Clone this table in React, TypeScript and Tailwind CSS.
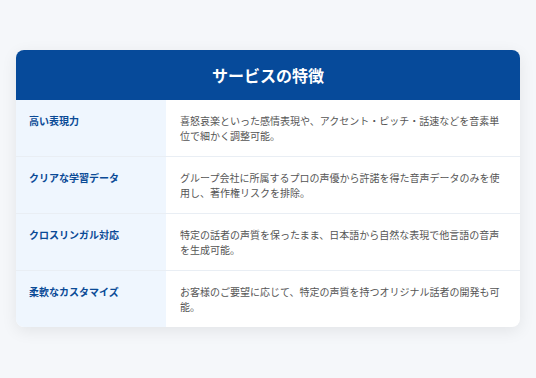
const features = [
  {
    title: '高い表現力',
    body: '喜怒哀楽といった感情表現や、アクセント・ピッチ・話速などを音素単位で細かく調整可能。',
  },
  {
    title: 'クリアな学習データ',
    body: 'グループ会社に所属するプロの声優から許諾を得た音声データのみを使用し、著作権リスクを排除。',
  },
  {
    title: 'クロスリンガル対応',
    body: '特定の話者の声質を保ったまま、日本語から自然な表現で他言語の音声を生成可能。',
  },
  {
    title: '柔軟なカスタマイズ',
    body: 'お客様のご要望に応じて、特定の声質を持つオリジナル話者の開発も可能。',
  },
];

export default function App() {
  return (
    <div
      className="min-h-[378px] w-full bg-[#f5f7fa] px-4 pt-[50px]"
      style={{ fontFamily: '"Noto Sans CJK JP", "Noto Sans", sans-serif' }}
    >
      <div className="w-[504px] overflow-hidden rounded-lg bg-white shadow-[0_4px_16px_rgba(0,0,0,0.08)]">
        <div className="flex h-[50px] items-center justify-center bg-[#064a9a]">
          <h2 className="text-[16px] font-bold leading-6 text-white">サービスの特徴</h2>
        </div>
        <div>
          {features.map((f, i) => (
            <div
              key={f.title}
              className={`flex ${i < features.length - 1 ? 'border-b border-[#e9eef4]' : ''}`}
            >
              <div className="w-[150px] shrink-0 bg-[#eff6fe] px-[13px] py-[13px] text-[10px] font-bold leading-[15px] text-[#0a4a96]">
                {f.title}
              </div>
              <div className="flex-1 py-[13px] pl-[14px] pr-[16px] text-[10px] leading-[15px] text-[#555]">
                {f.body}
              </div>
            </div>
          ))}
        </div>
      </div>
    </div>
  );
}
